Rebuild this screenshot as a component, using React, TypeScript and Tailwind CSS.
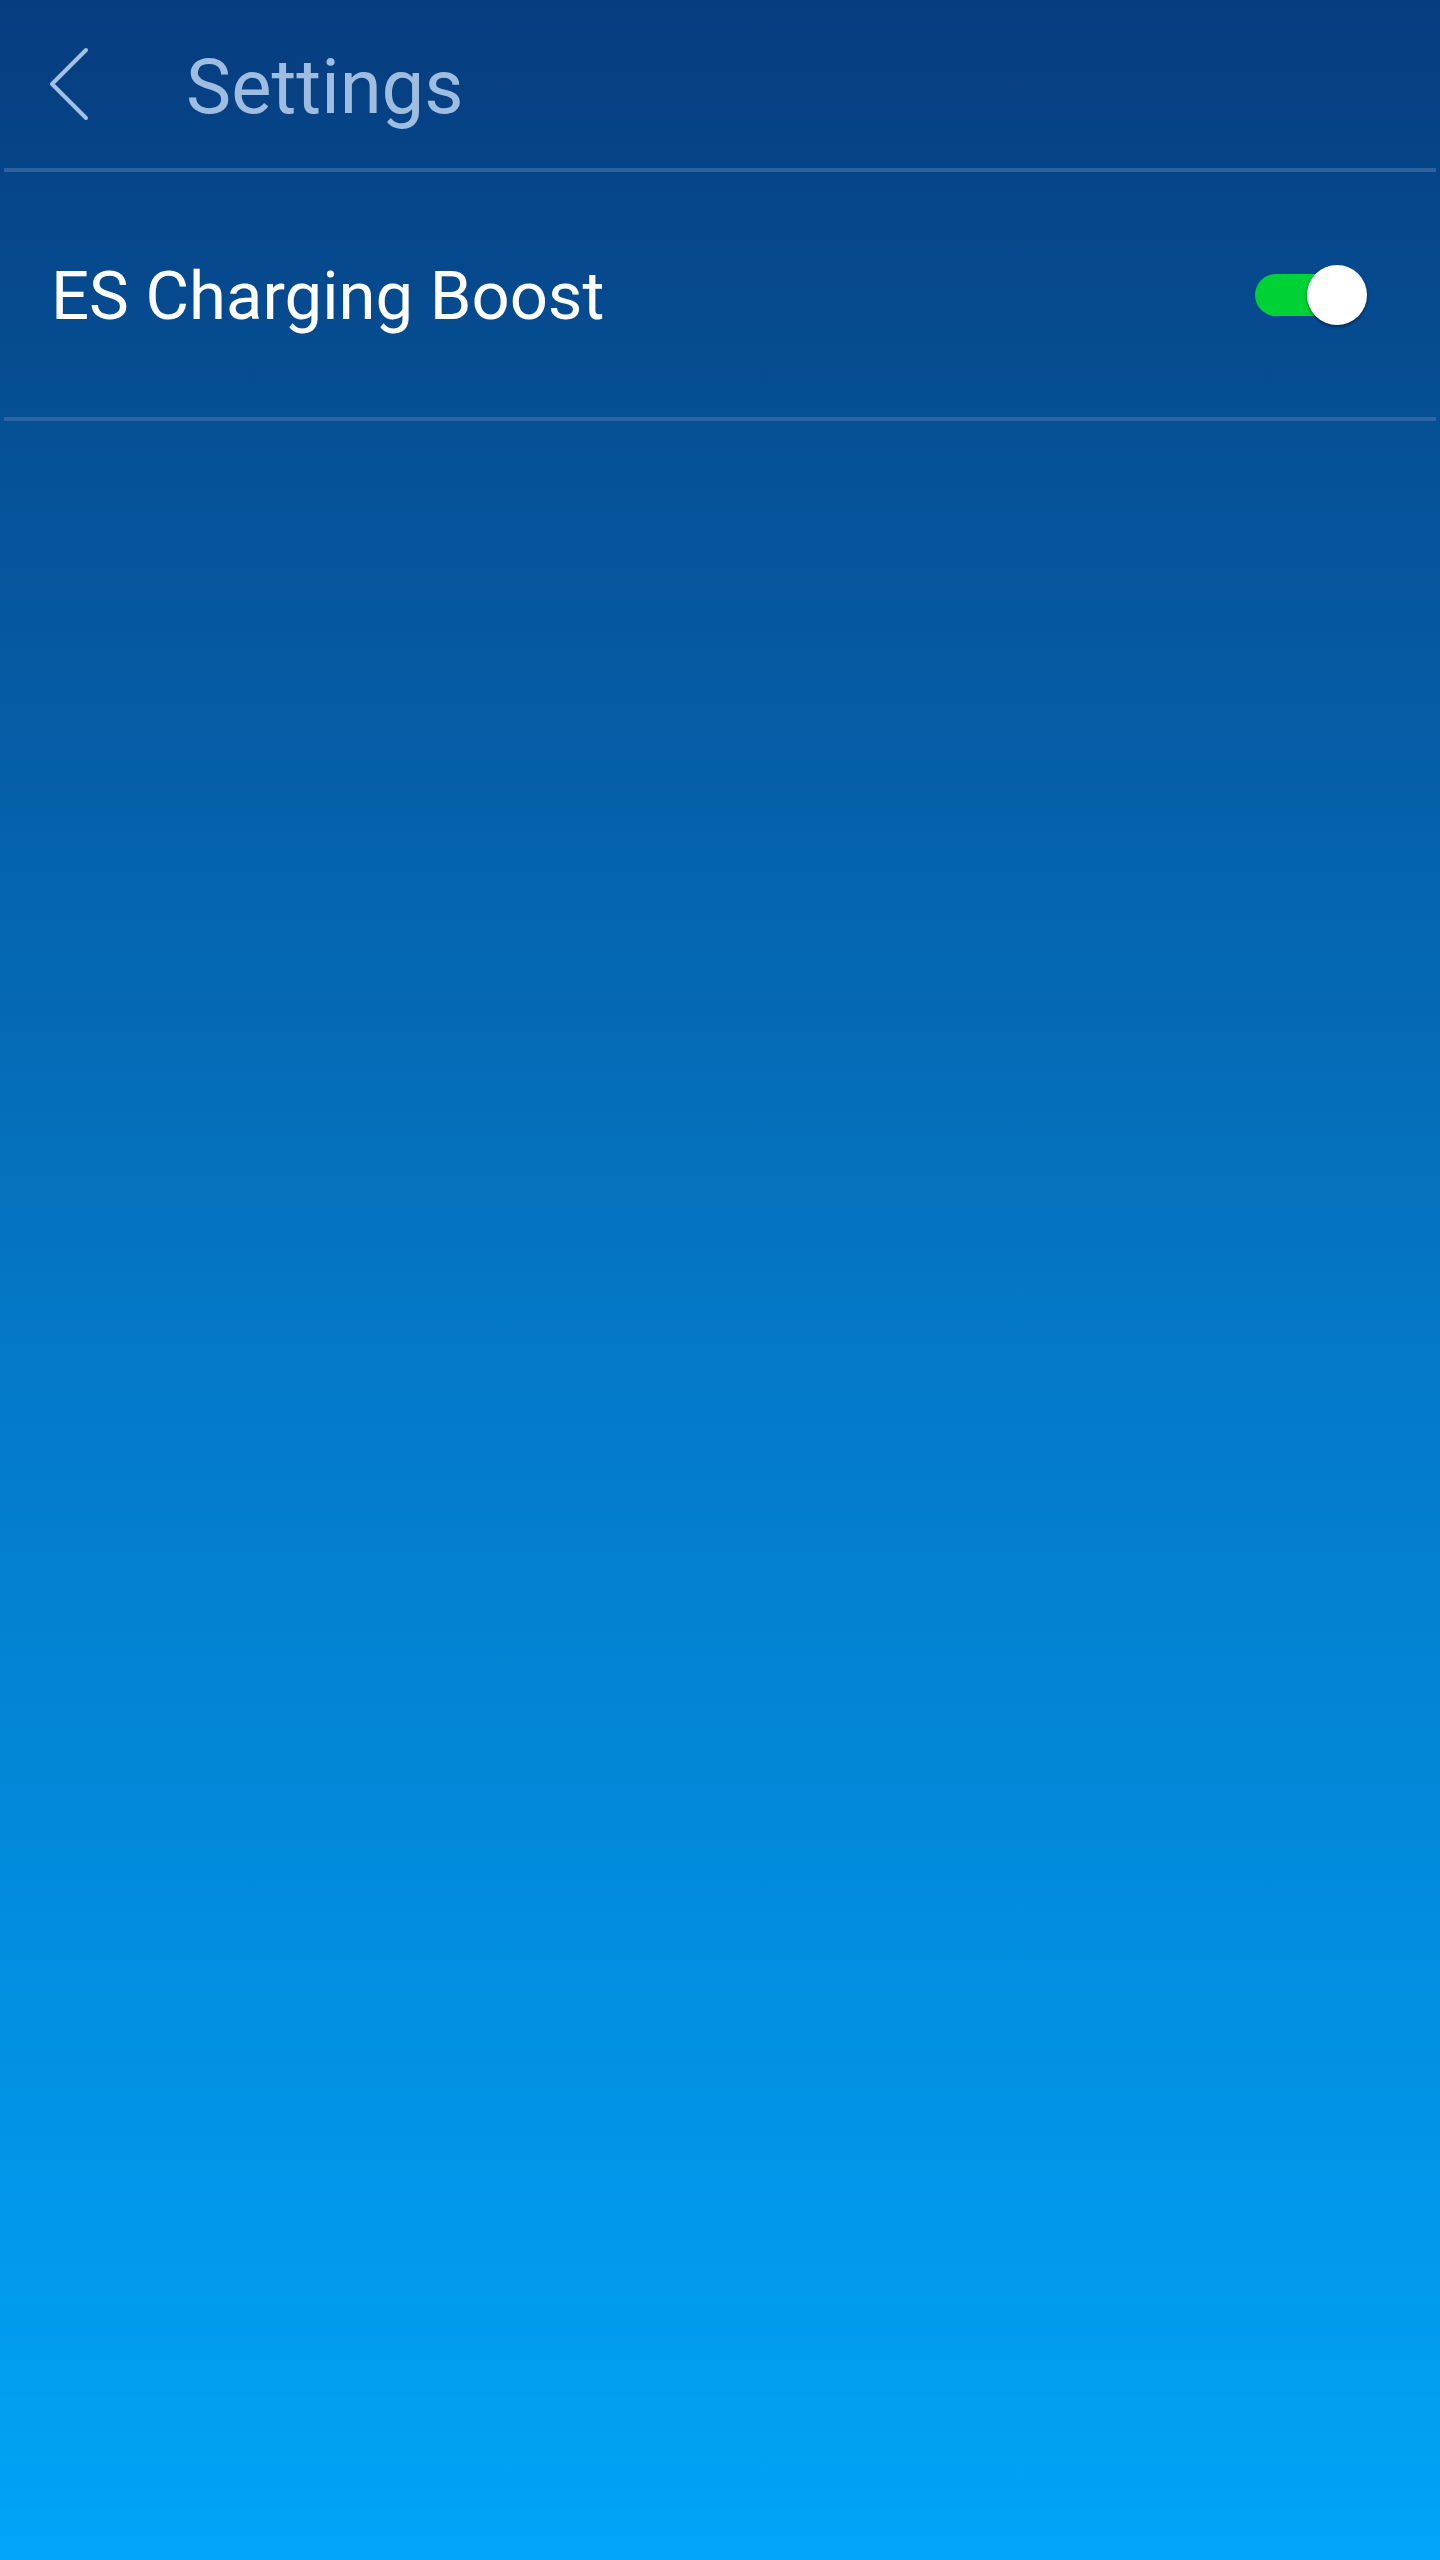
import React, { useState } from "react";

const ChevronLeft: React.FC = () => (
  <svg width="42" height="76" viewBox="0 0 42 76" fill="none">
    <path
      d="M38 4 L4 38 L38 72"
      stroke="#a3c1e3"
      strokeWidth="4"
      strokeLinecap="round"
      strokeLinejoin="round"
    />
  </svg>
);

interface ToggleProps {
  on: boolean;
  onChange: () => void;
}

const Toggle: React.FC<ToggleProps> = ({ on, onChange }) => (
  <button
    onClick={onChange}
    className="relative w-[112px] h-[60px] flex items-center"
  >
    <span
      className={`w-[100px] h-[42px] rounded-full ${
        on ? "bg-[#00d134]" : "bg-[#6f8fb3]"
      }`}
    />
    <span
      className={`absolute top-0 w-[60px] h-[60px] rounded-full bg-white shadow-[0_2px_3px_rgba(0,0,0,0.45)] ${
        on ? "left-[52px]" : "left-0"
      }`}
    />
  </button>
);

export default function App() {
  const [boost, setBoost] = useState(true);

  return (
    <div className="w-[1440px] h-[2560px] bg-gradient-to-b from-[#063d7f] via-[#0476c4] to-[#00a4f8] font-['Roboto',sans-serif]">
      <header className="h-[168px] flex items-center">
        <div className="pl-[48px] w-[186px] flex items-center">
          <ChevronLeft />
        </div>
        <h1 className="text-[76px] leading-none text-[#9fbde0] pt-[6px]">
          Settings
        </h1>
      </header>
      <div className="mx-[4px] h-[4px] bg-[#2c62a0]" />

      <div className="h-[245px] flex items-center justify-between pl-[51px] pr-[73px]">
        <span className="text-[67px] leading-none text-white pt-[4px]">
          ES Charging Boost
        </span>
        <Toggle on={boost} onChange={() => setBoost(!boost)} />
      </div>
      <div className="mx-[4px] h-[4px] bg-[#2a66a6]" />
    </div>
  );
}
